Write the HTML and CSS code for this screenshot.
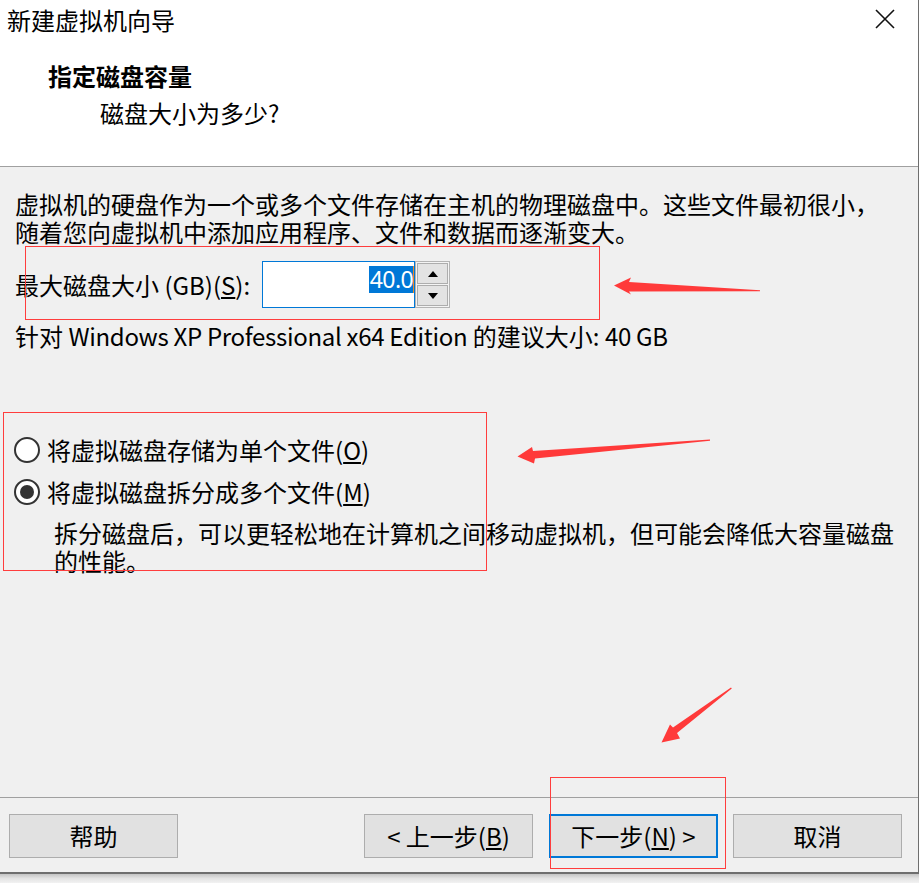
FILE: index.html
```html
<!DOCTYPE html>
<html lang="zh-CN">
<head>
<meta charset="utf-8">
<title>新建虚拟机向导</title>
<link rel="stylesheet" href="styles.css">
</head>
<body>
<div class="window">
  <header class="header">
    <div class="titlebar">
      <span class="title">新建虚拟机向导</span>
      <span class="close" aria-label="关闭">
        <svg width="20" height="20" viewBox="0 0 20 20"><path d="M1 1 L19 19 M19 1 L1 19" stroke="#111" stroke-width="1.6" fill="none"/></svg>
      </span>
    </div>
    <h1 class="heading">指定磁盘容量</h1>
    <p class="subheading">磁盘大小为多少?</p>
  </header>

  <main class="content">
    <p class="intro">虚拟机的硬盘作为一个或多个文件存储在主机的物理磁盘中。这些文件最初很小，随着您向虚拟机中添加应用程序、文件和数据而逐渐变大。</p>

    <div class="size-row">
      <span class="size-label">最大磁盘大小 (GB)(<u>S</u>):</span>
      <div class="spin">
        <div class="spin-input"><span class="sel">40.0</span><span class="caret"></span></div>
        <div class="spin-buttons">
          <span class="spin-btn"><svg width="10" height="6" viewBox="0 0 10 6"><path d="M0 6 L5 0 L10 6 Z" fill="#000"/></svg></span>
          <span class="spin-btn"><svg width="10" height="6" viewBox="0 0 10 6"><path d="M0 0 L10 0 L5 6 Z" fill="#000"/></svg></span>
        </div>
      </div>
    </div>

    <p class="recommend">针对 <span class="latin">Windows XP Professional x64 Edition</span> 的建议大小: <span class="latin">40 GB</span></p>

    <div class="options">
      <div class="radio-row"><span class="radio"></span><span>将虚拟磁盘存储为单个文件(<u>O</u>)</span></div>
      <div class="radio-row second"><span class="radio checked"></span><span>将虚拟磁盘拆分成多个文件(<u>M</u>)</span></div>
      <p class="desc">拆分磁盘后，可以更轻松地在计算机之间移动虚拟机，但可能会降低大容量磁盘的性能。</p>
    </div>
  </main>

  <footer class="footer">
    <button class="btn">帮助</button>
    <div class="spacer"></div>
    <button class="btn">&lt; 上一步(<u>B</u>)</button>
    <button class="btn primary">下一步(<u>N</u>) &gt;</button>
    <button class="btn last">取消</button>
  </footer>

  <svg class="annotations" width="919" height="883" viewBox="0 0 919 883">
    <g fill="none" stroke="#ff3d3d" stroke-width="1">
      <rect x="25.5" y="246.5" width="574" height="73"/>
      <rect x="3.5" y="412.5" width="483" height="158"/>
      <rect x="550.5" y="777.5" width="175" height="91"/>
    </g>
    <g fill="#ff3a3a">
      <polygon points="614,285.5 631,277.5 629,282 760,290.3 760,291.3 629,291.5 631,294.5"/>
      <polygon points="517.5,456.5 532,447 533,451 710,439.5 710,440.8 535,458.5 534,463.5"/>
      <polygon points="661.5,742.5 670,724.5 673,727.5 731,687.5 731.8,688.6 677,733 680,738.5"/>
    </g>
  </svg>
</div>
<div class="shadow"></div>
</body>
</html>
```

FILE: styles.css
```css
* {
  box-sizing: border-box;
}

html, body {
  margin: 0;
  padding: 0;
}

body {
  background: #f0f0f0;
  font-family: "Noto Sans CJK SC", "Noto Sans", sans-serif;
  font-size: 24px;
  color: #000;
  width: 919px;
  height: 883px;
  overflow: hidden;
}

.window {
  position: relative;
  width: 919px;
  height: 874px;
  background: #f0f0f0;
  border-right: 1px solid #6e6e6e;
  border-bottom: 2px solid #6e6e6e;
  display: flex;
  flex-direction: column;
}

.shadow {
  height: 9px;
  background: linear-gradient(#c4c4c4, #e4e4e4 50%, #f2f2f2);
}

/* header */
.header {
  height: 167px;
  background: #fff;
  border-bottom: 1px solid #a0a0a0;
  flex: none;
}

.titlebar {
  display: flex;
  justify-content: space-between;
  align-items: flex-start;
  padding: 6px 23px 0 7px;
}

.title {
  line-height: 28px;
}

.close {
  display: block;
  margin-top: 3px;
  width: 20px;
  height: 20px;
}

.close svg {
  display: block;
}

.heading {
  margin: 28px 0 0 48px;
  font-size: 24px;
  font-weight: bold;
  line-height: 28px;
}

.subheading {
  margin: 9px 0 0 100px;
  line-height: 28px;
}

/* content */
.content {
  flex: 1;
  display: flex;
  flex-direction: column;
}

.intro {
  margin: 23px 0 0 15px;
  width: 876px;
  line-height: 28px;
}

.size-row {
  margin: 15px 0 0 15px;
  display: flex;
  align-items: center;
  height: 47px;
}

.size-label {
  width: 247px;
  line-height: 28px;
  white-space: nowrap;
}

.spin {
  display: flex;
  height: 47px;
}

.spin-input {
  width: 153px;
  height: 47px;
  background: #fff;
  border: 1px solid #0078d7;
  display: flex;
  justify-content: flex-end;
  align-items: flex-start;
  padding: 4px 0 0 0;
}

.sel {
  background: #0078d7;
  color: #fff;
  height: 27px;
  line-height: 27px;
  padding: 0 0 0 1px;
  font-family: "Noto Sans", "Noto Sans CJK SC", sans-serif;
  font-size: 23px;
  letter-spacing: -0.6px;
  white-space: nowrap;
}

.caret {
  width: 1px;
  height: 27px;
  background: #f08a24;
}

.spin-buttons {
  width: 35px;
  height: 47px;
  border: 1px solid #b4b4b4;
  background: #f4f4f4;
  padding: 1px;
  display: flex;
  flex-direction: column;
  gap: 1px;
}

.spin-btn {
  flex: 1;
  background: #e3e3e3;
  border: 1px solid #adadad;
  display: flex;
  align-items: center;
  justify-content: center;
}

.spin-btn svg {
  display: block;
}

.recommend {
  margin: 14px 0 0 15px;
  line-height: 28px;
  white-space: nowrap;
}

.recommend .latin {
  letter-spacing: -0.3px;
}

.options {
  margin-top: 86px;
}

.radio-row {
  display: flex;
  align-items: center;
  gap: 7px;
  height: 28px;
  padding-left: 14px;
  line-height: 28px;
}

.radio-row.second {
  margin-top: 14px;
}

.radio {
  position: relative;
  width: 26px;
  height: 26px;
  border: 2px solid #333;
  border-radius: 50%;
  background: #fff;
  flex: none;
}

.radio.checked::after {
  content: "";
  position: absolute;
  left: 4px;
  top: 4px;
  width: 14px;
  height: 14px;
  border-radius: 50%;
  background: #333;
}

.desc {
  margin: 13px 0 0 54px;
  width: 850px;
  line-height: 28px;
}

/* footer */
.footer {
  flex: none;
  height: 75px;
  border-top: 1px solid #a0a0a0;
  padding: 16px 16px 14px 9px;
  display: flex;
  align-items: flex-start;
}

.spacer {
  flex: 1;
}

.btn {
  width: 169px;
  height: 44px;
  margin: 0;
  padding: 0;
  background: #e1e1e1;
  border: 1px solid #adadad;
  font-family: "Noto Sans CJK SC", "Noto Sans", sans-serif;
  font-size: 24px;
  color: #000;
  line-height: 28px;
}

.btn.primary {
  border: 2px solid #0078d7;
  margin-left: 16px;
}

.btn.last {
  margin-left: 15px;
}

.annotations {
  position: absolute;
  left: 0;
  top: 0;
  pointer-events: none;
}
```
